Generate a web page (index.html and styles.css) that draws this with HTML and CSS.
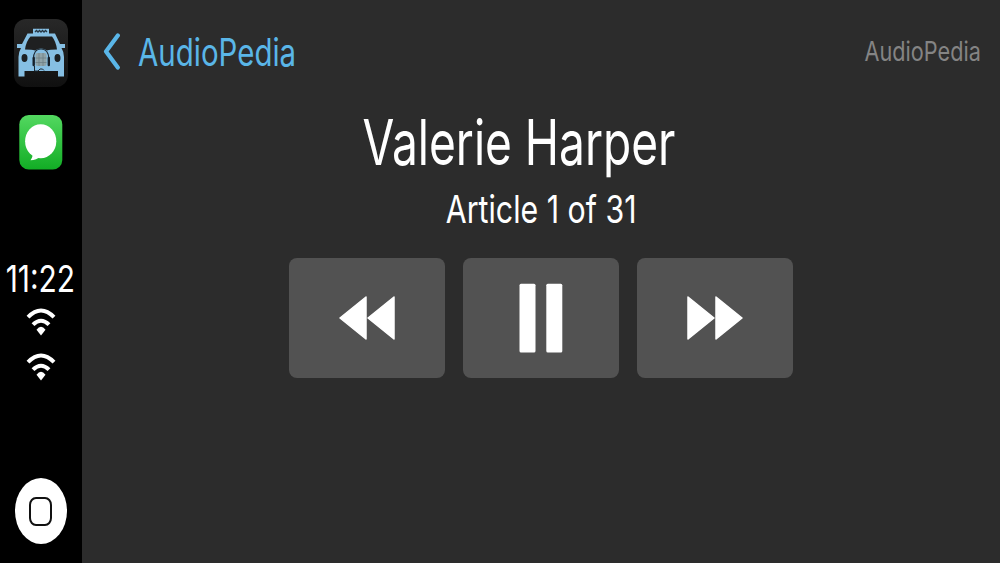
FILE: index.html
```
<!DOCTYPE html>
<html lang="en">
<head>
    <meta charset="UTF-8">
    <meta name="viewport" content="width=device-width, initial-scale=1.0">
    <title>AudioPedia</title>
    <link rel="stylesheet" href="styles.css">
</head>
<body>
    <aside class="sidebar">
        <svg class="app-icon" viewBox="0 0 54 68">
            <defs>
                <linearGradient id="dark" x1="0" y1="0" x2="0" y2="1">
                    <stop offset="0" stop-color="#282828"/>
                    <stop offset="1" stop-color="#101010"/>
                </linearGradient>
            </defs>
            <rect width="54" height="68" rx="12" fill="url(#dark)"/>
            <!-- taxi -->
            <path d="M19 9.800h16v4.700H41l5 10.500H51v4h-3.500q2.500 4 2.500 9v19.500h-6v-5.500H10.500v5.500h-6V38q0-5 2.500-9H3v-4h5l5.500-10.500H19z" fill="#86bfe3"/>
            <path d="M16.500 17.500h21.500q4 5 5 13-7 0-10 1-6-4-12 0-3-1-10-1 1-8 5.500-13z" fill="#1f2021"/>
            <path d="M21 13l1.500-1.500L24 13l1.500-1.500L27 13l1.500-1.500L30 13l1.500-1.500L33 13" fill="none" stroke="#263642" stroke-width="1.300"/>
            <ellipse cx="10.500" cy="39" rx="3" ry="4" fill="#1c2023"/>
            <ellipse cx="43.500" cy="39" rx="3" ry="4" fill="#1c2023"/>
            <!-- globe with headphones -->
            <path d="M19.500 40q0-10 7.500-10t8 10" fill="none" stroke="#1d2a35" stroke-width="1.200"/>
            <rect x="21.500" y="34" width="11" height="13" rx="2" fill="#8fa3a8"/>
            <path d="M25 34v13M29 34v13M21.500 39h11M21.500 43.500h11" stroke="#6b7c82" stroke-width=".7"/>
            <path d="M19.700 39v7M34.800 39v7" stroke="#16202a" stroke-width="2.400" stroke-linecap="round"/>
            <path d="M20.500 47v5h3.500l2-2h2.500l1.500 1.500" fill="none" stroke="#1d2a35" stroke-width="1"/>
        </svg>

        <svg class="messages-icon" viewBox="0 0 44 55">
            <defs>
                <linearGradient id="green" x1="0" y1="0" x2="0" y2="1">
                    <stop offset="0" stop-color="#53d860"/>
                    <stop offset="1" stop-color="#12ad25"/>
                </linearGradient>
            </defs>
            <rect x=".3" width="43" height="54.500" rx="9.500" fill="url(#green)"/>
            <ellipse cx="21.700" cy="26.200" rx="15.600" ry="17" fill="#fff"/>
            <path d="M13.500 36q1 5.500-2 9.200 6 0 10-4z" fill="#fff"/>
        </svg>

        <div class="clock"><span class="time">11<span class="colon">:</span>22</span></div>

        <svg class="wifi" viewBox="0 0 30 28">
            <path d="M2 9.200Q15-4 28 9.200M7 16.700Q15 8.700 23 16.700" fill="none" stroke="#fff" stroke-width="4"/>
            <path d="M10.500 21.800Q15 15.800 19.500 21.800L15 27.500z" fill="#fff"/>
        </svg>
        <svg class="wifi" viewBox="0 0 30 28">
            <path d="M2 9.200Q15-4 28 9.200M7 16.700Q15 8.700 23 16.700" fill="none" stroke="#fff" stroke-width="4"/>
            <path d="M10.500 21.800Q15 15.800 19.500 21.800L15 27.500z" fill="#fff"/>
        </svg>

        <div class="home-button"><div class="home-square"></div></div>
    </aside>

    <main class="screen">
        <header class="top-bar">
            <a class="back" href="#">
                <svg class="chevron" viewBox="0 0 20 38">
                    <path d="M15.800 2.500L4 18.500l11.800 16" fill="none" stroke="#5ab6e8" stroke-width="4.200" stroke-linecap="round" stroke-linejoin="round"/>
                </svg>
                <span class="back-label">AudioPedia</span>
            </a>
            <span class="app-name">AudioPedia</span>
        </header>

        <h1 class="title"><span>Valerie Harper</span></h1>
        <p class="subtitle"><span>Article 1 of 31</span></p>

        <div class="controls">
            <button class="control" aria-label="Previous">
                <svg class="skip" viewBox="0 0 56 44">
                    <path d="M27 1v42L1 22zM55 1v42L29 22z" fill="#fff" stroke="#fff" stroke-width="1.500" stroke-linejoin="round"/>
                </svg>
            </button>
            <button class="control" aria-label="Pause">
                <svg class="pause" viewBox="0 0 44 70">
                    <rect x=".5" y=".8" width="16" height="68.700" rx="1.500" fill="#fff"/>
                    <rect x="27.300" y=".8" width="16" height="68.700" rx="1.500" fill="#fff"/>
                </svg>
            </button>
            <button class="control" aria-label="Next">
                <svg class="skip" viewBox="0 0 56 44">
                    <path d="M1 1v42l26-21zM29 1v42l26-21z" fill="#fff" stroke="#fff" stroke-width="1.500" stroke-linejoin="round"/>
                </svg>
            </button>
        </div>
    </main>
</body>
</html>
```
FILE: styles.css
```
* {
    margin: 0;
    padding: 0;
    box-sizing: border-box;
    font-family: Inter, "Liberation Sans", sans-serif;
}
body {
    display: flex;
    width: 1000px;
    height: 563px;
    overflow: hidden;
    background: #2c2c2c;
    color: #fff;
}
svg {
    display: block;
    flex-shrink: 0;
}

/* Sidebar */
.sidebar {
    display: flex;
    flex-direction: column;
    align-items: center;
    width: 82px;
    height: 563px;
    padding: 19px 1px 19px 0;
    background: #000;
}
.app-icon {
    width: 54px;
    height: 68px;
}
.messages-icon {
    width: 44px;
    height: 55px;
    margin-top: 27.500px;
}
.clock {
    display: flex;
    justify-content: center;
    width: 81px;
    height: 40px;
    margin: 89.500px 0 9px;
    line-height: 40px;
    font-size: 36.500px;
    font-weight: 400;
    white-space: nowrap;
}
.time {
    flex-shrink: 0;
    transform: scaleX(0.82);
}
.colon {
    display: inline-block;
    transform: translateY(-3px);
}
.wifi {
    width: 30px;
    height: 28px;
    margin-bottom: 16.500px;
}
.home-button {
    display: flex;
    align-items: center;
    justify-content: center;
    width: 52px;
    height: 66px;
    margin-top: auto;
    border-radius: 50%;
    background: #fff;
}
.home-square {
    width: 23px;
    height: 29px;
    border: 2px solid #111;
    border-radius: 7px / 8px;
}

/* Main screen */
.screen {
    flex: 1;
    display: flex;
    flex-direction: column;
}
.top-bar {
    display: flex;
    align-items: center;
    justify-content: space-between;
    height: 103px;
    padding: 0 19px 0 20px;
}
.back {
    display: flex;
    align-items: center;
    gap: 15.500px;
    color: #5ab6e8;
    text-decoration: none;
}
.chevron {
    width: 20px;
    height: 38px;
}
.back-label {
    font-size: 38.500px;
    transform: scaleX(0.765);
    transform-origin: left;
}
.app-name {
    color: #848484;
    font-size: 27px;
    transform: scaleX(0.803);
    transform-origin: right;
}
.title {
    display: flex;
    justify-content: center;
    height: 79px;
    padding-right: 45px;
    line-height: 79px;
    font-size: 63px;
    font-weight: 400;
}
.title span {
    transform: scaleX(0.731);
}
.subtitle {
    display: flex;
    justify-content: center;
    height: 53px;
    line-height: 54px;
    font-size: 38.500px;
}
.subtitle span {
    transform: scaleX(0.787);
}
.controls {
    display: flex;
    justify-content: center;
    gap: 18.500px;
    margin-top: 23px;
}
.control {
    display: flex;
    align-items: center;
    justify-content: center;
    width: 155.500px;
    height: 119.500px;
    border: none;
    border-radius: 8px;
    background: #525252;
}
.skip {
    width: 56px;
    height: 44px;
}
.pause {
    width: 44px;
    height: 70px;
}
```
